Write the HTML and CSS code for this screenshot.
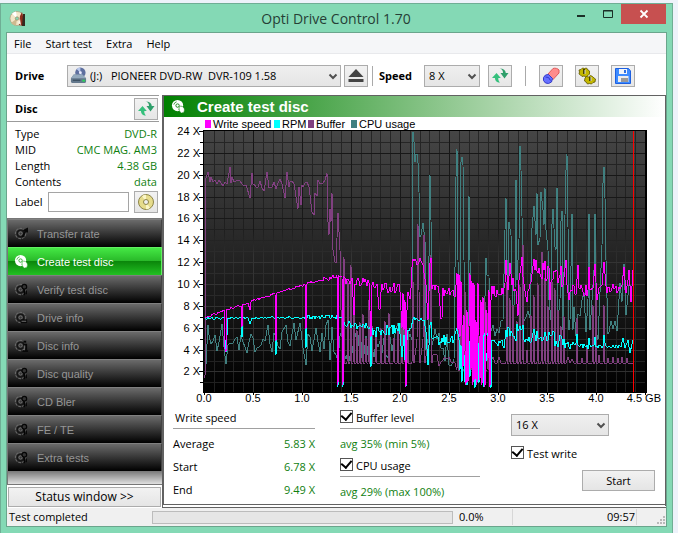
FILE: index.html
```html
<!DOCTYPE html>
<html lang="en">
<head>
<meta charset="utf-8">
<title>Opti Drive Control 1.70</title>
<link rel="stylesheet" href="styles.css">
</head>
<body>
<svg class="defs" aria-hidden="true">
  <defs>
    <symbol id="refresh" viewBox="0 0 18 18">
      <path d="M5.500 6 1 11h3c0 2.500 1.500 4.500 5 4.500C7.500 14 7.200 12.500 7.300 11h2.500z" fill="#35c07c"/>
      <path d="M8.500 1.500c2.500.5 3.500 2 3.500 4.500H9.500l4 5.500L17.500 6h-2.700c-.3-2.800-2.300-4.500-6.300-4.500z" fill="#2f9f6b"/>
    </symbol>
    <symbol id="chevron" viewBox="0 0 10 8">
      <path d="M1.500 1.500 5 5l3.500-3.500" fill="none" stroke="#505050" stroke-width="2"/>
    </symbol>
    <symbol id="disc" viewBox="0 0 16 16">
      <circle cx="7" cy="7" r="6" fill="currentColor"/>
      <circle cx="7" cy="7" r="1.800" fill="none" stroke="var(--hole)" stroke-width="1"/>
      <path d="M3 6a4 4 0 0 1 3-3M11 8a4 4 0 0 1-3 3" fill="none" stroke="var(--hole)" stroke-width=".8"/>
    </symbol>
    <symbol id="n-write" viewBox="0 0 16 16">
      <use href="#disc"/><path d="M9 8c2-1 4 0 5 2 1 2 0 5-3 5-2-1-3-4-2-7z" fill="currentColor" stroke="var(--hole)" stroke-width=".6"/>
    </symbol>
    <symbol id="n-dim" viewBox="0 0 16 16">
      <circle cx="7" cy="8" r="5.500" fill="none" stroke="#666" stroke-width="1.200" stroke-dasharray="3 1"/>
      <circle cx="7" cy="8" r="3.500" fill="none" stroke="#161616" stroke-width="1.500"/>
      <circle cx="7" cy="8" r="1.700" fill="none" stroke="#737373"/>
    </symbol>
    <symbol id="n-rate" viewBox="0 0 16 16"><use href="#n-dim"/><path d="m9 12 4-8M10 5l4-2v4" fill="none" stroke="#090909" stroke-width="1.800"/></symbol>
    <symbol id="n-find" viewBox="0 0 16 16"><use href="#n-dim"/><circle cx="11" cy="5" r="2.500" fill="#333" stroke="#050505" stroke-width="1.300"/><path d="M11 8v6m2-5v4" stroke="#050505" stroke-width="1.500"/></symbol>
    <symbol id="n-drive" viewBox="0 0 16 16"><use href="#n-dim"/><path d="M7 10h7v4H7z" fill="#080808"/><path d="M8 12h5" stroke="#777"/></symbol>
    <symbol id="n-info" viewBox="0 0 16 16"><use href="#n-dim"/><path d="M10 4h3m-3 3h3v7m-4 0h6" fill="none" stroke="#080808" stroke-width="2"/><path d="M11 8v5" stroke="#777"/></symbol>
  </defs>
</svg>

<div class="window">
  <header class="titlebar">
    <svg class="app-icon" viewBox="0 0 18 18" aria-hidden="true">
      <circle cx="8" cy="8.500" r="7" fill="#f2e6c8" stroke="#a99a7b" stroke-width=".7"/>
      <path d="M8 8.500 3 3.500A7 7 0 0 1 7 1.500z" fill="#fff"/><path d="M8 8.500 2 13a7 7 0 0 0 5 2.500z" fill="#cdb98f"/>
      <circle cx="8" cy="8.500" r="1.700" fill="#84d9b5" stroke="#998862" stroke-width=".7"/>
      <path d="m10 15 1-9 2-4 1 4v10z" fill="#8e2f1c"/><path d="m13 16 1-12h2v12z" fill="#33291f"/><path d="m9 13 2-4 1 6z" fill="#f8f4e9"/>
    </svg>
    <h1>Opti Drive Control 1.70</h1>
    <div class="caption">
      <button class="cap" aria-label="Minimize"><svg viewBox="0 0 12 10"><path d="M2 7h8" stroke="#1b2f27" stroke-width="2"/></svg></button>
      <button class="cap" aria-label="Maximize"><svg viewBox="0 0 12 10"><path d="M1.500 1.500h9v7h-9zM1 2h10" fill="none" stroke="#1b2f27"/></svg></button>
      <button class="cap close" aria-label="Close"><svg viewBox="0 0 12 10"><path d="m2.500 1.500 7 7m0-7-7 7" stroke="#fff" stroke-width="1.800"/></svg></button>
    </div>
  </header>

  <div class="client">
    <nav class="menu" aria-label="Main menu">
      <button>File</button><button>Start test</button><button>Extra</button><button>Help</button>
    </nav>

    <div class="toolbar">
      <label class="bold drive-label" for="drive">Drive</label>
      <span class="combo combo-drive">
        <svg class="combo-icon" viewBox="0 0 18 18" aria-hidden="true">
          <circle cx="11" cy="6" r="5.500" fill="#5e6f9f"/><path d="m11 6-4-4a5.500 5.500 0 0 1 4-1.500zM11 6l4 4a5 5 0 0 1-4 1.500z" fill="#b9c9ec"/><circle cx="11" cy="6" r="1.500" fill="#eef"/>
          <path d="m1 12 3-4h9l4 4v4l-1 1H2l-1-1z" fill="#64798d"/><path d="m1 12 3-4h9l4 4z" fill="#93a9bd"/><path d="M3 14h8" stroke="#2d4050"/><path d="M13 13.500h3v2h-3z" fill="#2bd05a"/>
        </svg>
        <select id="drive"><option>(J:) &nbsp; PIONEER DVD-RW &nbsp;DVR-109 1.58</option></select>
        <svg class="arrow"><use href="#chevron"/></svg>
      </span>
      <button class="tool eject" aria-label="Eject"><svg viewBox="0 0 18 18"><path d="m9 2 7.500 8h-15z" fill="#444"/><path d="M1.500 12h15v3h-15z" fill="#444"/></svg></button>
      <span class="sep"></span>
      <label class="bold speed-label" for="speed">Speed</label>
      <span class="combo combo-speed"><select id="speed"><option>8 X</option></select><svg class="arrow"><use href="#chevron"/></svg></span>
      <button class="tool" aria-label="Refresh speeds"><svg><use href="#refresh"/></svg></button>
      <span class="sep sep-wide"></span>
      <div class="tools">
        <button class="tool" aria-label="Erase"><svg viewBox="0 0 18 18"><path d="m6 7 5-5.500c2-.8 5 0 6 1.500v3l-6 6.500z" fill="#ff8c8c" stroke="#e05a5a"/><path d="m1.500 10.500 2-2.500 3-.5 4 4-1 3.500-3 1.500-3-.5-2-2.500z" fill="#6670ff" stroke="#3438c8"/><path d="m3.500 10 3 .5 2 3" fill="none" stroke="#3438c8"/></svg></button>
        <button class="tool" aria-label="Options"><svg viewBox="0 0 18 18"><g fill="#c4b800" stroke="#5c5300" stroke-width=".8"><path d="m1 3 2-.5L4.500 1l2 .5L8.500 1 10 3l1.500 1v3L10 8.500 8 10l-2-1-2 .5L2.500 8 1 7l.5-2z"/><path d="m7 11 1.500-1.500 2 .5 2-1.500 2 1 1.500 1.500 1.500 1-.5 3-2 .5-1.500 1.500-2-.5-2 .5L8 15l-1.500-1z"/></g><path d="M6 2v5m6 3v4" stroke="#3c3600" stroke-width="1.800"/><path d="M7 3v4m6 3v4" stroke="#d9d9d9"/></svg></button>
        <button class="tool" aria-label="Save"><svg viewBox="0 0 18 18"><path d="M1.500 1.500h13L16.500 4v12.500h-15z" fill="#3d8bff" stroke="#1d5fe0"/><path d="M5 2h8v5H5z" fill="#f2f5fa"/><path d="M10 3h2v3h-2z" fill="#2f6fe0"/><path d="M4 9h10.500v6H4z" fill="#ececec"/><path d="M7 11h7v4H7z" fill="#999"/></svg></button>
      </div>
    </div>

    <div class="body">
      <aside class="side">
        <div class="disc-head"><h2>Disc</h2><button class="tool" aria-label="Refresh disc"><svg><use href="#refresh"/></svg></button></div>
        <dl class="facts">
          <div><dt>Type</dt><dd>DVD-R</dd></div>
          <div><dt>MID</dt><dd>CMC MAG. AM3</dd></div>
          <div><dt>Length</dt><dd>4.38 GB</dd></div>
          <div><dt>Contents</dt><dd>data</dd></div>
        </dl>
        <div class="label-row">
          <label for="disc-label">Label</label><input id="disc-label" type="text">
          <button class="tool" aria-label="Read label"><svg viewBox="0 0 18 18"><circle cx="9" cy="9" r="7.500" fill="#e6dc8c" stroke="#8d8548"/><path d="M9 9 5 3a7 7 0 0 1 4-1.200zM9 9l4 6a7 7 0 0 1-4 1.200z" fill="#faf6c8"/><circle cx="9" cy="9" r="2.500" fill="#f0f0f0" stroke="#8d8548"/></svg></button>
        </div>
        <nav class="tests" aria-label="Tests">
          <button><svg><use href="#n-rate"/></svg>Transfer rate</button>
          <button class="active"><svg><use href="#n-write"/></svg>Create test disc</button>
          <button><svg><use href="#n-find"/></svg>Verify test disc</button>
          <button><svg><use href="#n-drive"/></svg>Drive info</button>
          <button><svg><use href="#n-info"/></svg>Disc info</button>
          <button><svg><use href="#n-find"/></svg>Disc quality</button>
          <button><svg><use href="#n-find"/></svg>CD Bler</button>
          <button><svg><use href="#n-find"/></svg>FE / TE</button>
          <button><svg><use href="#n-find"/></svg>Extra tests</button>
        </nav>
        <button class="push status-toggle">Status window &gt;&gt;</button>
      </aside>

      <main class="panel">
        <h2 class="panel-head"><svg><use href="#n-write"/></svg>Create test disc</h2>
        <svg id="chart" class="chart" viewBox="164 117 501 289" role="img" aria-label="Write speed, RPM, buffer and CPU usage over disc position"></svg>
        <div class="results">
          <section class="speeds">
            <h3>Write speed</h3>
            <dl>
              <div><dt>Average</dt><dd>5.83 X</dd></div>
              <div><dt>Start</dt><dd>6.78 X</dd></div>
              <div><dt>End</dt><dd>9.49 X</dd></div>
            </dl>
          </section>
          <section class="levels">
            <label class="check"><input type="checkbox" checked>Buffer level</label>
            <p>avg 35% (min 5%)</p>
            <label class="check"><input type="checkbox" checked>CPU usage</label>
            <p>avg 29% (max 100%)</p>
          </section>
          <section class="actions">
            <span class="combo combo-write"><select aria-label="Write speed"><option>16 X</option></select><svg class="arrow"><use href="#chevron"/></svg></span>
            <label class="check"><input type="checkbox" checked>Test write</label>
            <button class="push start">Start</button>
          </section>
        </div>
      </main>
    </div>

    <footer class="statusbar">
      <span class="message">Test completed</span>
      <span class="track"></span>
      <span class="percent">0.0%</span>
      <span class="time">09:57</span>
      <svg class="grip" viewBox="0 0 10 10" aria-hidden="true"><path d="M7 0h2v2H7zM4 3h2v2H4zM7 3h2v2H7zM1 6h2v2H1zM4 6h2v2H4zM7 6h2v2H7z" fill="#b9b9b9"/></svg>
    </footer>
  </div>
</div>
<script src="chart.js"></script>
</body>
</html>
```

FILE: styles.css
```css
* { box-sizing: border-box; }

body {
  margin: 0;
  padding: 3px 5px 0 0;
  min-height: 100vh;
  display: flex;
  background: #edf2fa;
  color: #000;
  font: 11px/16px "Open Sans", "Noto Sans", sans-serif;
}

h1, h2, h3, p, dl, dd { margin: 0; font-size: inherit; font-weight: normal; }
button, select, input { font: inherit; color: inherit; border-radius: 0; padding: 0; margin: 0; }
svg { display: block; }
.defs { position: absolute; width: 0; height: 0; }
.bold { font-weight: bold; }

.window {
  flex: 1;
  min-width: 0;
  display: flex;
  flex-direction: column;
  padding: 0 6px 7px;
  background: #84d9b5;
  border: 1px solid #6fae95;
  border-width: 1px 1px 0 1px;
}

.titlebar { height: 29px; display: flex; align-items: center; }
.titlebar h1 { flex: 1; text-align: center; color: #263f36; font-size: 14px; line-height: 24px; padding-left: 78px; }
.app-icon { width: 18px; height: 18px; margin-left: 2px; }
.caption { display: flex; align-self: flex-start; }
.cap { width: 27px; height: 20px; border: 0; background: none; display: grid; place-items: center; }
.cap svg { width: 12px; height: 10px; }
.cap.close { width: 45px; background: #c75050; }

.client {
  flex: 1;
  display: flex;
  flex-direction: column;
  background: #fff;
  outline: 1px solid #6aa58c;
}

.menu { display: flex; gap: 14px; height: 21px; padding: 1px 7px 0; background: #f5f6f8; border-bottom: 1px solid #e8e9ec; }
.menu button { border: 0; background: none; }

.toolbar { display: flex; align-items: center; height: 41px; padding: 2px 0 0 8px; }
.drive-label { width: 52px; }
.combo { position: relative; display: block; height: 22px; }
.combo select {
  appearance: none;
  width: 100%;
  height: 100%;
  padding-left: 4px;
  border: 1px solid #acacac;
  background: linear-gradient(#efefef, #e5e5e5);
}
.combo .arrow { position: absolute; right: 3px; top: 8px; width: 10px; height: 8px; pointer-events: none; }
.combo-icon { position: absolute; left: 3px; top: 2px; width: 17px; height: 17px; pointer-events: none; }
.combo-drive { width: 274px; }
.combo-drive select { padding-left: 22px; }
.combo-speed { width: 56px; }
.combo-write { width: 98px; }
.speed-label { width: 45px; }

.tool {
  width: 24px;
  height: 22px;
  flex: none;
  display: grid;
  place-items: center;
  border: 1px solid #acacac;
  background: linear-gradient(#f2f2f2, #e6e6e6);
}
.tool svg { width: 18px; height: 18px; }
.eject { margin-left: 3px; }
.sep { width: 1px; height: 20px; margin: 0 6px 0 4px; background: #aaa; }
.combo-speed + .tool { margin-left: 8px; }
.sep-wide { margin: 0 13px; }
.tools { display: flex; gap: 12px; }

.body { flex: 1; display: flex; }
.side { width: 155px; flex: none; display: flex; flex-direction: column; }
.disc-head {
  display: flex;
  justify-content: space-between;
  align-items: center;
  height: 27px;
  margin-right: 3px;
  padding: 0 1px 0 8px;
  border: 1px solid #9b9b9b;
  border-width: 1px 0;
}
.disc-head h2 { font-weight: bold; }
.facts { padding: 4px 5px 0 8px; }
.facts div { display: flex; justify-content: space-between; }
.facts dd, .speeds dd, .levels p { color: #108010; }
.label-row { display: flex; align-items: center; height: 28px; padding: 0 4px 4px 8px; }
.label-row label { width: 33px; }
.label-row input { flex: 1; min-width: 0; height: 20px; border: 1px solid #a5a5a5; margin-right: 5px; background: #fff; }

.tests {
  flex: 1;
  padding: 0 0 13px;
  border: 1px solid #777;
  border-right: 0;
  background: linear-gradient(#777 252px, #808080 253px, #e0e0e0);
}
.tests button {
  --hole: #30b030;
  width: 100%;
  height: 28px;
  display: flex;
  align-items: center;
  gap: 8px;
  padding-left: 6px;
  border: 0;
  border-top: 1px solid #808080;
  border-right: 1px solid #444;
  background: linear-gradient(#6b6b6b, #303030 55%, #000);
  color: #969696;
  font-family: "Liberation Sans", Arial, sans-serif;
  text-align: left;
}
.tests svg { width: 15px; height: 15px; }
.tests .active {
  color: #fff;
  border-color: #62ef62;
  background: linear-gradient(#45e845, #28b828 49%, #0b870b 50%, #22c022);
}
.push { border: 1px solid #acacac; background: linear-gradient(#f2f2f2, #e5e5e5); }
.status-toggle { height: 20px; margin: 2px 1px 1px; font-size: 12px; }

.panel {
  flex: 1;
  min-width: 0;
  display: flex;
  flex-direction: column;
  border: 1px solid #626262;
  border-left-width: 2px;
  border-bottom: 4px double #626262;
}
.panel-head {
  --hole: #108010;
  height: 21px;
  display: flex;
  align-items: center;
  gap: 11px;
  padding-left: 7px;
  color: #fff;
  background: linear-gradient(90deg, #008000, #fff);
  font: bold 15px/20px "Liberation Sans", Arial, sans-serif;
}
.panel-head svg { width: 15px; height: 15px; }
.chart { width: 100%; height: auto; }
.chart text { font: 11px "Liberation Sans", Arial, sans-serif; }

.results { flex: 1; display: flex; justify-content: space-between; padding: 4px 10px 0 9px; }
.speeds { width: 142px; }
.speeds h3 { height: 19px; padding-left: 2px; border-bottom: 1px solid #a0a0a0; }
.speeds dl { padding-top: 7px; display: grid; gap: 7px; }
.speeds dl div { display: flex; justify-content: space-between; }
.levels { width: 146px; padding-right: 6px; }
.levels .check { height: 19px; border-bottom: 1px solid #a0a0a0; }
.levels p { padding: 7px 0 6px; }
.levels p:last-child { padding-bottom: 0; }
.check { display: flex; align-items: flex-start; gap: 3px; }
.check input {
  appearance: none;
  width: 13px;
  height: 13px;
  border: 1px solid #555;
  background: #fff;
  display: grid;
  place-items: center;
}
.check input:checked::after {
  content: "";
  width: 5px;
  height: 8px;
  margin-top: -3px;
  border: solid #000;
  border-width: 0 2px 2px 0;
  transform: rotate(40deg);
}
.actions { width: 144px; display: flex; flex-direction: column; padding-top: 4px; }
.actions .check { margin-top: 10px; }
.start { width: 73px; height: 21px; align-self: flex-end; margin-top: 8px; }

.statusbar { display: flex; align-items: center; height: 18px; background: #f0f0f0; }
.message { width: 145px; padding-left: 2px; }
.track { flex: 1; height: 13px; border: 1px solid #bcbcbc; background: #e6e6e6; margin-right: 2px; }
.percent { width: 58px; padding-left: 4px; border-right: 1px solid #d7d7d7; }
.time { width: 124px; padding-right: 1px; text-align: right; border-right: 1px solid #d7d7d7; }
.grip { width: 10px; height: 10px; margin-left: 19px; align-self: flex-end; }
```

FILE: chart.js
```js
const svg = document.getElementById('chart');
const LEFT = 204, RIGHT = 646, TOP = 131, BOTTOM = 392;
const X_UNIT = 98, Y_UNIT = 10.93;

function add(tag, attrs, text) {
  const el = document.createElementNS('http://www.w3.org/2000/svg', tag);
  for (const key in attrs) el.setAttribute(key, attrs[key]);
  if (text) el.textContent = text;
  svg.appendChild(el);
  return el;
}

let seed = 11;
function random() {
  seed = (seed * 16807) % 2147483647;
  return seed / 2147483647;
}

// A series is a list of [x, y] points and [x0, x1, yStart, yEnd, spread, step] noisy runs.
function series(color, items) {
  const points = [];
  for (const it of items) {
    if (it.length === 2) { points.push(it); continue; }
    const [x0, x1, y0, y1, spread, step = 1] = it;
    for (let x = x0; x < x1; x += step) {
      const mid = y0 + (y1 - y0) * (x - x0) / (x1 - x0);
      points.push([x, Math.round(mid + (random() - 0.5) * 2 * spread)]);
    }
  }
  points.sort((a, b) => a[0] - b[0]);
  add('polyline', { points: points.map(p => p.join(',')).join(' '), fill: 'none', stroke: color, 'shape-rendering': 'crispEdges' });
}

// Narrow spikes from a base level, one [x, peak] pair each.
function spikes(base, list) {
  return list.flatMap(([x, peak]) => [[x - 1, base], [x, peak], [x + 1, base]]);
}

add('defs', {}).innerHTML =
  '<linearGradient id="plot" x1="0" y1="0" x2="0" y2="1"><stop offset="0" stop-color="#464646"/><stop offset=".5" stop-color="#222"/><stop offset="1" stop-color="#000"/></linearGradient>' +
  '<linearGradient id="grid" gradientUnits="userSpaceOnUse" x1="0" y1="131" x2="0" y2="392"><stop offset="0" stop-color="#161616"/><stop offset=".38" stop-color="#191919"/><stop offset=".48" stop-color="#343434"/><stop offset="1" stop-color="#303030"/></linearGradient>';
add('rect', { x: 203, y: 130, width: 444, height: 263, fill: '#000' });
add('rect', { x: LEFT, y: TOP, width: RIGHT - LEFT - 1, height: BOTTOM - TOP, fill: 'url(#plot)' });

let grid = '', major = '';
for (let i = 1; i < 45; i++) {
  const part = `M${Math.round(LEFT + i * X_UNIT / 10)}.5 131V392`;
  if (i % 5) grid += part; else major += part;
}
for (let i = 1; i < 24; i++) {
  const part = `M204 ${Math.round(TOP + i * Y_UNIT)}.5H645`;
  if (i % 2) grid += part; else major += part;
}
add('path', { d: grid, stroke: 'url(#grid)', opacity: 0.65, 'shape-rendering': 'crispEdges' });
add('path', { d: major, stroke: 'url(#grid)', 'shape-rendering': 'crispEdges' });

let ticks = '';
for (let i = 0; i < 24; i++) ticks += `M${i % 2 ? 200 : 199} ${Math.round(TOP + i * Y_UNIT)}.5h4`;
for (let i = 0; i < 10; i++) ticks += `M${LEFT + i * 49}.5 392v3`;
add('path', { d: ticks, stroke: '#000' });
for (let v = 24; v > 0; v -= 2) add('text', { x: 200, y: Math.round(135 + (24 - v) * Y_UNIT), 'text-anchor': 'end' }, v + ' X');
for (let i = 0; i < 9; i++) add('text', { x: 204 + i * 49, y: 402, 'text-anchor': 'middle' }, (i / 2).toFixed(1));
add('text', { x: 661, y: 402, 'text-anchor': 'end' }, '4.5 GB');

for (const [x, color, name] of [[205, '#f0f', 'Write speed'], [274, '#0ff', 'RPM'], [308, '#804080', 'Buffer'], [351, '#408080', 'CPU usage']]) {
  add('rect', { x, y: 120, width: 6, height: 8, fill: color });
  add('text', { x: x + 8, y: 128 }, name);
}

// CPU usage
series('#408080', [
  [205, 340], [206, 364], [208, 325],
  [209, 221, 345, 343, 10, 2], [222, 324], [224, 347], [226, 364], [228, 345],
  [229, 266, 344, 346, 13, 2], [268, 325], [270, 344],
  [272, 284, 345, 343, 12, 2], [286, 325], [288, 342], [290, 346], [294, 323], [296, 340], [300, 323], [303, 348], [306, 365], [308, 334],
  [310, 326, 340, 338, 14, 2], [326, 325], [328, 320], [330, 360],
  [332, 412, 344, 338, 18, 2],
  [412, 340], [413, 132], [414, 142], [415, 162], [416, 154], [417, 154], [418, 163], [419, 192], [420, 237], [421, 235], [423, 223], [425, 240], [426, 350],
  [428, 340], [430, 175], [431, 220], [432, 345],
  [433, 453, 342, 350, 17, 2],
  [454, 360], [456, 177], [457, 149], [458, 260], [459, 350], [460, 340], [461, 162], [462, 157], [463, 165], [464, 260], [465, 350], [468, 360], [469, 196], [470, 260], [471, 370],
  [472, 485, 345, 345, 25, 2],
  [486, 258], [487, 275], [489, 276], [490, 340],
  [491, 504, 330, 325, 8, 2],
  [505, 230], [506, 198], [507, 260], [508, 290], [509, 222], [511, 235], [513, 320], [515, 290], [516, 180], [517, 280], [519, 240], [520, 146], [521, 170], [522, 216], [523, 320],
  [524, 532, 315, 313, 7, 2],
  [532, 228], [534, 206], [536, 235], [537, 193], [538, 245], [540, 238], [541, 192], [543, 210], [544, 225], [545, 188], [546, 230], [548, 250], [549, 300], [551, 320], [552, 224], [553, 209], [555, 247], [556, 250], [557, 188], [558, 320], [560, 300], [561, 221], [562, 211], [563, 330], [565, 215], [566, 170], [567, 154], [568, 227], [569, 330], [570, 320], [572, 214], [573, 330],
  [574, 588, 315, 315, 28, 2],
  [588, 300], [589, 214], [590, 330], [594, 270], [595, 214], [596, 330], [598, 340], [602, 245], [603, 183], [604, 167], [605, 198], [606, 260], [608, 334],
  [609, 618, 325, 324, 9, 2],
  [620, 283], [622, 302], [623, 275], [624, 264], [626, 315],
  [627, 633, 308, 305, 22, 2]
]);

// Buffer level
series('#804080', [
  [205, 378], [206, 178], [208, 172], [210, 182],
  [211, 229, 181, 182, 4, 2], [230, 167], [231, 183],
  [232, 248, 180, 186, 5, 2], [250, 198], [252, 173], [253, 184],
  [254, 266, 187, 186, 7, 2], [267, 172], [269, 188],
  [270, 284, 187, 183, 6, 2], [285, 198], [287, 172], [289, 187], [290, 296, 183, 184, 4, 2],
  [298, 209], [299, 187], [301, 205], [302, 185],
  [303, 311, 184, 185, 4, 2], [312, 212], [314, 215], [315, 193], [317, 196], [318, 180], [320, 184],
  [321, 326, 180, 182, 4, 2], [327, 173], [328, 222], [329, 235], [330, 209], [331, 222], [332, 193], [333, 250], [335, 262], [336, 263], [338, 213], [340, 250], [341, 310], [343, 363], [344, 257], [345, 363],
  ...spikes(363, [[348, 281], [351, 265], [354, 310], [357, 330], [360, 322], [363, 314], [366, 338], [369, 300], [372, 325], [376, 333], [381, 328], [385, 321], [389, 313], [394, 338], [398, 328], [402, 320], [405, 305], [408, 330]]),
  [412, 363], [413, 280], [414, 363], [417, 340], [418, 224], [419, 290], [420, 363], [423, 340], [424, 235], [425, 363], [430, 330], [431, 255], [432, 363],
  [433, 452, 359, 358, 9, 2], [455, 363],
  ...spikes(370, [[458, 300], [461, 315], [465, 290], [468, 323], [472, 292], [475, 320], [478, 307], [481, 315], [485, 300], [488, 313]]),
  [490, 363], [493, 357], [495, 363], [497, 363], [499, 357], [501, 363], [504, 363],
  ...spikes(363, [[507, 282], [510, 298], [513, 305], [517, 321], [520, 285], [523, 245], [527, 350], [531, 315], [534, 295], [538, 283], [542, 252], [545, 278], [548, 306], [552, 280], [555, 288], [558, 310], [561, 326], [564, 316]]),
  [566, 363], [568, 357], [570, 363], [572, 359], [574, 363],
  ...spikes(363, [[577, 318], [582, 358], [587, 345], [593, 305], [596, 285], [599, 355], [604, 305], [608, 358], [613, 357], [618, 358], [622, 357], [627, 358]]),
  [633, 363]
]);

// RPM
series('#0ff', [
  [205, 225, 318, 318, 1], [225, 340], [226, 352], [228, 318],
  [229, 242, 318, 317, 1], [242, 337], [243, 318],
  [244, 249, 318, 318, 1], [250, 324], [252, 318],
  [253, 276, 318, 317, 1], [276, 355], [277, 318],
  [278, 306, 317, 318, 1], [306, 348], [307, 318],
  [308, 338, 317, 317, 2], [338, 387], [339, 317], [342, 318], [343, 387], [344, 322],
  [345, 371, 323, 327, 4], [371, 367], [372, 328],
  [373, 401, 332, 329, 6], [402, 357], [404, 335], [405, 360], [406, 387], [407, 340], [408, 330],
  [409, 412, 332, 328, 3], [413, 425, 319, 319, 2], [426, 332], [428, 365], [430, 325], [431, 322], [432, 338],
  [433, 456, 342, 338, 5], [457, 328], [459, 340], [460, 370],
  [461, 491, 358, 358, 31], [491, 388], [492, 340],
  [493, 505, 340, 345, 4], [506, 330],
  [507, 524, 334, 332, 9], [524, 532, 340, 340, 3],
  [532, 550, 335, 334, 7], [550, 566, 338, 342, 8],
  [566, 577, 344, 345, 5], [577, 334], [578, 589, 346, 347, 3], [589, 338], [590, 595, 346, 346, 2], [595, 337],
  [596, 604, 347, 346, 2], [604, 335], [605, 343],
  [606, 622, 346, 347, 2], [623, 338], [625, 348], [628, 340], [630, 353], [633, 340]
]);

// Write speed
series('#f0f', [
  [205, 317], [206, 225, 317, 310, 1], [225, 349], [226, 352], [227, 309],
  [228, 242, 309, 305, 1], [242, 327], [243, 304],
  [244, 249, 304, 302, 1], [250, 310], [251, 302],
  [252, 276, 301, 293, 1], [276, 341], [277, 293],
  [278, 306, 292, 284, 1], [306, 329], [307, 284],
  [308, 338, 283, 276, 2], [338, 385], [339, 276], [342, 277], [343, 385], [344, 277],
  [345, 353, 282, 282, 5], [354, 315], [355, 284],
  [356, 370, 283, 282, 6], [371, 337], [372, 285],
  [373, 378, 283, 288, 4], [379, 309], [380, 309], [381, 292],
  [382, 401, 287, 290, 6], [402, 328], [403, 293], [404, 330], [405, 300], [406, 387], [407, 310], [408, 292], [410, 299], [411, 288], [412, 267],
  [413, 424, 261, 263, 5], [424, 273], [426, 285], [428, 320], [430, 263], [431, 258], [432, 289],
  [433, 440, 285, 293, 6], [441, 319], [442, 318], [443, 288],
  [444, 456, 293, 292, 6], [457, 273], [458, 330], [459, 274], [460, 337], [461, 281], [463, 367], [464, 315], [466, 385], [467, 310], [468, 382], [470, 273], [471, 370], [472, 281], [473, 385], [474, 283], [475, 380], [476, 320], [477, 385], [478, 283], [479, 335], [480, 380], [481, 300], [482, 385], [483, 297], [484, 335], [485, 387], [486, 310], [488, 360], [489, 290], [490, 387], [491, 300],
  [492, 504, 292, 294, 7], [505, 283], [506, 260], [508, 290], [510, 263], [512, 285],
  [513, 517, 285, 291, 8], [518, 316], [519, 280], [521, 266], [522, 257], [523, 277], [525, 291], [527, 302],
  [528, 532, 288, 285, 4], [533, 550, 271, 272, 13], [550, 300], [551, 564, 276, 278, 13],
  [566, 260], [567, 285], [569, 300],
  [570, 577, 288, 292, 7], [578, 265], [579, 288],
  [580, 589, 289, 291, 7], [589, 267], [590, 290], [593, 288], [595, 264], [597, 300], [599, 288], [602, 285], [604, 262], [606, 286],
  [607, 623, 289, 288, 5], [624, 267], [626, 293], [628, 280], [629, 270], [631, 302], [633, 270]
]);

add('rect', { x: 633, y: TOP, width: 1, height: BOTTOM - TOP, fill: '#f00' });
```
